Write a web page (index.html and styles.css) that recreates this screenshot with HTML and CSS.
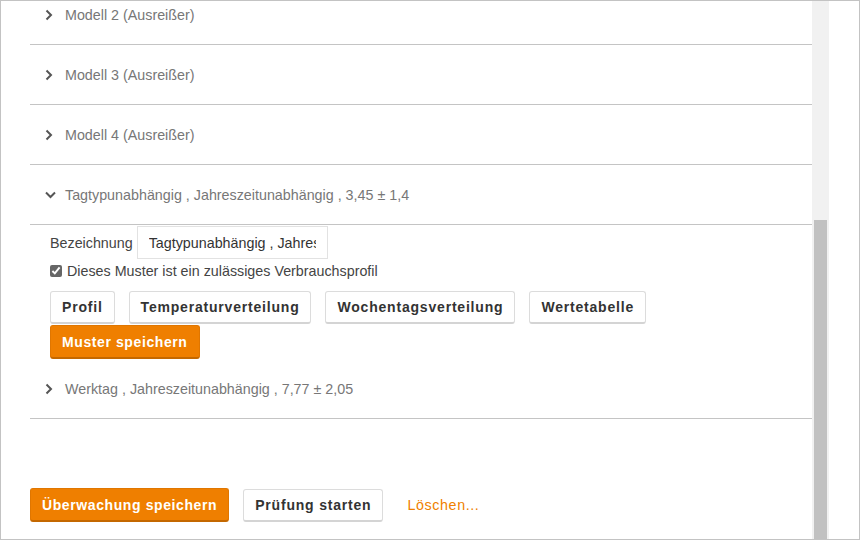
FILE: index.html
```html
<!DOCTYPE html>
<html lang="de">
<head>
<meta charset="utf-8">
<title>Muster</title>
<link rel="stylesheet" href="styles.css">
</head>
<body>
<div class="frame">
  <div class="main">
    <div class="list">
      <div class="row">
        <svg class="chev" width="20" height="12" viewBox="0 0 20 12"><path d="M1.5 1.5 L6 6 L1.5 10.5" fill="none" stroke="#555" stroke-width="2"/></svg>
        <span class="row-title">Modell 2 (Ausreißer)</span>
      </div>
      <div class="row">
        <svg class="chev" width="20" height="12" viewBox="0 0 20 12"><path d="M1.5 1.5 L6 6 L1.5 10.5" fill="none" stroke="#555" stroke-width="2"/></svg>
        <span class="row-title">Modell 3 (Ausreißer)</span>
      </div>
      <div class="row">
        <svg class="chev" width="20" height="12" viewBox="0 0 20 12"><path d="M1.5 1.5 L6 6 L1.5 10.5" fill="none" stroke="#555" stroke-width="2"/></svg>
        <span class="row-title">Modell 4 (Ausreißer)</span>
      </div>
      <div class="row">
        <svg class="chev" width="20" height="12" viewBox="0 0 20 12"><path d="M1 3.5 L5.5 8 L10 3.5" fill="none" stroke="#555" stroke-width="2"/></svg>
        <span class="row-title">Tagtypunabhängig , Jahreszeitunabhängig , 3,45 ± 1,4</span>
      </div>
      <div class="detail">
        <div class="name-line">
          <label class="lbl" for="bez">Bezeichnung</label>
          <input id="bez" class="txt" type="text" value="Tagtypunabhängig , Jahreszeitunabhängig , 3,45 ± 1,4">
        </div>
        <label class="check-line">
          <input type="checkbox" class="cb" checked>
          <span>Dieses Muster ist ein zulässiges Verbrauchsprofil</span>
        </label>
        <div class="btn-row">
          <button class="btn">Profil</button>
          <button class="btn">Temperaturverteilung</button>
          <button class="btn">Wochentagsverteilung</button>
          <button class="btn">Wertetabelle</button>
        </div>
        <div class="save-row">
          <button class="btn btn-orange">Muster speichern</button>
        </div>
      </div>
      <div class="row">
        <svg class="chev" width="20" height="12" viewBox="0 0 20 12"><path d="M1.5 1.5 L6 6 L1.5 10.5" fill="none" stroke="#555" stroke-width="2"/></svg>
        <span class="row-title">Werktag , Jahreszeitunabhängig , 7,77 ± 2,05</span>
      </div>
    </div>
    <div class="footer">
      <button class="btn btn-orange">Überwachung speichern</button>
      <button class="btn">Prüfung starten</button>
      <a class="link" href="#">Löschen...</a>
    </div>
  </div>
  <div class="scrollbar"><div class="thumb"></div></div>
  <div class="gutter"></div>
</div>
</body>
</html>
```
FILE: styles.css
```css
html, body {
  margin: 0;
  padding: 0;
  background: #fff;
}

body {
  font-family: "Liberation Sans", Arial, sans-serif;
  font-size: 14.3px;
  color: #444;
}

.frame {
  width: 860px;
  height: 540px;
  box-sizing: border-box;
  border: 1px solid #c3c3c3;
  display: flex;
  overflow: hidden;
  background: #fff;
}

.main {
  width: 811px;
  flex: none;
  box-sizing: border-box;
  padding-left: 29px;
  overflow: hidden;
}

.list {
  margin-top: -16px;
}

.row {
  height: 59px;
  border-bottom: 1px solid #c4c4c4;
  display: flex;
  align-items: center;
  padding-left: 15px;
}

.chev {
  flex: none;
  display: block;
}

.row-title {
  color: #777;
  white-space: nowrap;
}

.detail {
  padding: 1px 0 0 20px;
}

.name-line {
  display: flex;
  align-items: center;
  gap: 4px;
}

.lbl {
  color: #444;
}

.txt {
  width: 191px;
  height: 33px;
  box-sizing: border-box;
  border: 1px solid #e2e2e2;
  padding: 0 11px;
  font-family: "Liberation Sans", Arial, sans-serif;
  font-size: 14.3px;
  color: #333;
  outline: none;
  margin: 0;
}

.check-line {
  display: flex;
  align-items: center;
  height: 18px;
  margin-top: 3px;
  color: #444;
}

.cb {
  width: 12px;
  height: 12px;
  margin: 0 5px 0 0;
  accent-color: #666;
}

.btn-row {
  display: flex;
  gap: 14px;
  margin-top: 11px;
}

.btn {
  height: 33px;
  box-sizing: border-box;
  padding: 0 11px;
  border: 1px solid #dcdcdc;
  border-bottom: 2px solid #d4d4d4;
  border-radius: 3px;
  background: #fff;
  font-family: "Liberation Sans", Arial, sans-serif;
  font-size: 14px;
  font-weight: bold;
  letter-spacing: 0.8px;
  color: #333;
  margin: 0;
  cursor: pointer;
}

.btn-orange {
  height: 34px;
  background: #ef7f00;
  border: 1px solid #e07600;
  border-bottom: 2px solid #c46800;
  color: #fff;
  letter-spacing: 0.6px;
}

.save-row {
  display: flex;
  margin-top: 1px;
}

.footer {
  display: flex;
  align-items: center;
  gap: 14px;
  margin-top: 69px;
}

.link {
  color: #ef7f00;
  text-decoration: none;
  letter-spacing: 0.6px;
  margin-left: 10px;
}

.scrollbar {
  width: 17px;
  flex: none;
  background: #f1f1f1;
  display: flex;
  flex-direction: column;
}

.thumb {
  margin: 219px 2px 0 2px;
  flex: 1;
  background: #c1c1c1;
}

.gutter {
  flex: 1;
}
```
